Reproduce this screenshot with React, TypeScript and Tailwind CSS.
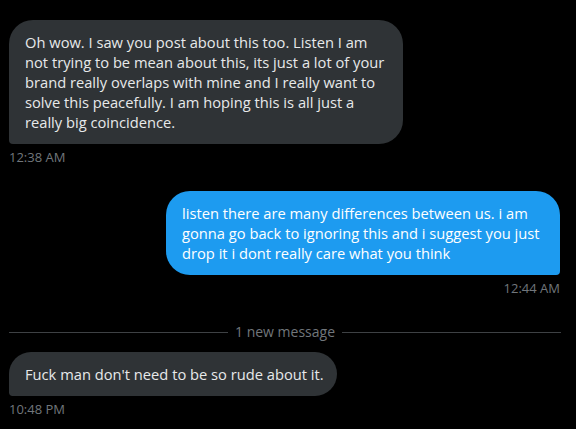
import React from "react";

const font = { fontFamily: "'Open Sans', 'Noto Sans', sans-serif" };

function Ts({ children, right }: { children: React.ReactNode; right?: boolean }) {
  return (
    <div className={`mt-[5px] text-[13px] leading-4 text-[#71767b] ${right ? "text-right pr-[16px]" : "pl-[9px]"}`}>
      {children}
    </div>
  );
}

export default function App() {
  return (
    <div className="w-[576px] h-[429px] bg-black overflow-hidden pt-[20px]" style={font}>
      <div className="pl-[9px]">
        <div className="w-[394px] bg-[#2f3336] text-[#e7e9ea] text-[14.7px] leading-5 px-4 py-3 rounded-[24px] rounded-bl-[4px] whitespace-nowrap">
          Oh wow. I saw you post about this too. Listen I am<br />
          not trying to be mean about this, its just a lot of your<br />
          brand really overlaps with mine and I really want to<br />
          solve this peacefully. I am hoping this is all just a<br />
          really big coincidence.
        </div>
      </div>
      <Ts>12:38 AM</Ts>

      <div className="flex justify-end pr-[16px] mt-[26px]">
        <div className="w-[394px] bg-[#1d9bf0] text-white text-[14.7px] leading-5 px-4 py-3 rounded-[24px] rounded-br-[4px] whitespace-nowrap">
          listen there are many differences between us. i am<br />
          gonna go back to ignoring this and i suggest you just<br />
          drop it i dont really care what you think
        </div>
      </div>
      <Ts right>12:44 AM</Ts>

      <div className="flex items-center gap-[7px] pl-[9px] pr-[15px] mt-[26px] h-5">
        <div className="flex-1 h-px bg-[#3e4144]" />
        <div className="text-[14px] leading-5 text-[#71767b]">1 new message</div>
        <div className="flex-1 h-px bg-[#3e4144]" />
      </div>

      <div className="pl-[9px] mt-[10px]">
        <div className="w-[328px] bg-[#2f3336] text-[#e7e9ea] text-[14.7px] leading-5 px-4 py-3 rounded-[24px] rounded-bl-[4px] whitespace-nowrap">
          Fuck man don't need to be so rude about it.
        </div>
      </div>
      <Ts>10:48 PM</Ts>
    </div>
  );
}
